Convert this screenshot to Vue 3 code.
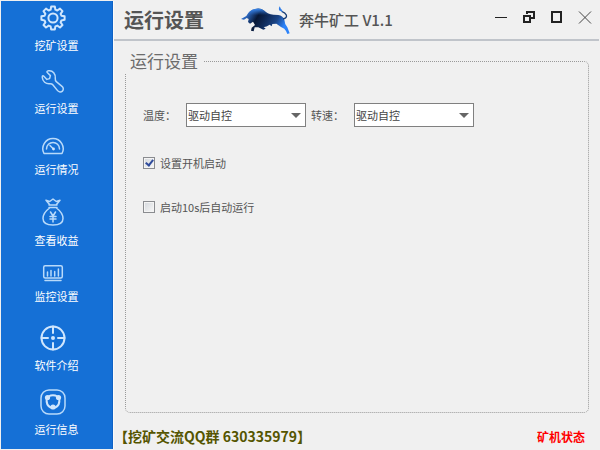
<script setup>
import { ref } from 'vue'

const items = [
  { icon: 'gear', label: '挖矿设置', w: 26, h: 26 },
  { icon: 'wrench', label: '运行设置', w: 24, h: 25 },
  { icon: 'gauge', label: '运行情况', w: 24, h: 18, loose: true },
  { icon: 'bag', label: '查看收益', w: 22, h: 28, loose: true },
  { icon: 'monitor', label: '监控设置', w: 22, h: 18 },
  { icon: 'target', label: '软件介绍', w: 26, h: 26, loose: true },
  { icon: 'info', label: '运行信息', w: 26, h: 26 },
]
const temperature = ref('auto')
const fan = ref('auto')
const bootStart = ref(true)
const autoRun = ref(false)
</script>

<template>
  <div class="window">
    <nav class="sidebar">
      <button v-for="it in items" :key="it.icon" type="button" class="nav-item" :class="{ loose: it.loose }">
        <svg class="nav-icon" :width="it.w" :height="it.h" :viewBox="`0 0 ${it.w} ${it.h}`" aria-hidden="true">
          <g v-if="it.icon === 'gear'" class="strong">
            <path d="M11.200 1.500h3.600l.6 3.200 1.900.8 2.700-1.900 2.500 2.500-1.900 2.700.8 1.900 3.200.6v3.500l-3.200.6-.8 1.900 1.900 2.700-2.500 2.500-2.700-1.900-1.900.8-.6 3.200h-3.600l-.6-3.200-1.900-.8-2.700 1.900-2.500-2.500 1.900-2.700-.8-1.900-3.200-.6v-3.500l3.200-.6.8-1.900-1.900-2.700 2.500-2.500 2.700 1.900 1.900-.8z" />
            <circle cx="13" cy="13" r="4.600" />
          </g>
          <path v-else-if="it.icon === 'wrench'" d="M7.500 1.800C5.800 2 5.500 2.800 6.500 3.800l2.900 2.800-.8 3-2.700.8-3-3.200C1.800 6.200 1.200 7 1.300 8.500c.2 4 3.500 6.600 7.500 6.200 1.300-.1 2.200 0 3 1l4.800 5.900c1.300 1.600 3.500 1.800 4.800.5s1.200-3.400-.4-4.700l-5.700-4.700c-1-.8-1.100-1.800-1-3.200C14.700 5 12 1.200 7.500 1.800z" />
          <g v-else-if="it.icon === 'gauge'">
            <path d="M3 16.500C-.5 10 4 1.500 12 1.500S24.500 10 21 16.500z" />
            <path d="M5.500 12c0-4 3-6.500 6.500-6.500s6.500 2.500 6.500 6.500M9 8.500l3.500 3.500" />
            <circle class="solid" cx="12.500" cy="12" r="1.400" />
          </g>
          <g v-else-if="it.icon === 'bag'">
            <path d="M7.500 6.500L4 2.200l3.700 1.300L11 1l3.300 2.500L18 2.200l-3.500 4.300M7 7h8M7 9.500h8M7.500 10C3.500 13 1 17 1 20.500 1 25 5 27 11 27s10-2 10-6.500c0-3.500-2.500-7.500-6.500-10.500" />
            <path d="M8.500 14l2.500 4 2.500-4M11 18v6M8 18.500h6M8 21h6" />
          </g>
          <g v-else-if="it.icon === 'monitor'">
            <rect x="1.700" y="1.700" width="18.600" height="12.300" rx="1.500" />
            <path d="M5.500 8v4M9 6.500V12M12.700 7.500V12M16.400 5v7M3 16.500h16" />
          </g>
          <g v-else-if="it.icon === 'target'">
            <circle class="strong" cx="13" cy="13" r="11.500" />
            <path class="strong" d="M13 1.500V8M13 18v6.500M1.500 13H8M18 13h6.500" />
            <circle class="solid" cx="13" cy="13" r="2" />
          </g>
          <g v-else>
            <rect x="1" y="1" width="24" height="24" rx="8" />
            <path class="strong" d="M8.500 7.500Q13 5 17.500 7.500M19.300 10c.5 4-1 7-4 8.500M10.700 18.500c-3-1.500-4.500-4.500-4-8.500" />
            <g class="solid">
              <circle cx="7.500" cy="8.500" r="2.600" />
              <circle cx="18.500" cy="8.500" r="2.600" />
              <circle cx="13" cy="18" r="2.600" />
            </g>
          </g>
        </svg>
        <span class="nav-label">{{ it.label }}</span>
      </button>
    </nav>

    <main class="main">
      <header class="header">
        <h1 class="title">运行设置</h1>
        <div class="brand">
          <svg width="49" height="28" viewBox="18 15 147 84" aria-hidden="true">
            <defs>
              <linearGradient id="hide" x1="0" y1="0" x2="1" y2="0.3">
                <stop offset="0" stop-color="#2f7de8" />
                <stop offset="0.2" stop-color="#2a62b5" />
                <stop offset="0.4" stop-color="#071735" />
                <stop offset="0.6" stop-color="#102c5c" />
                <stop offset="0.8" stop-color="#1b4486" />
                <stop offset="1" stop-color="#2c83fa" />
              </linearGradient>
              <linearGradient id="back" x1="0" y1="0" x2="0" y2="1">
                <stop offset="0" stop-color="#3b8cf5" />
                <stop offset="0.5" stop-color="#2c6fd0" stop-opacity="0" />
              </linearGradient>
            </defs>
            <path fill="url(#hide)" d="M18 54L34 45Q43 27 60 24Q76 20 88 29Q98 39 115 41L130 42Q143 44 148 56Q149 70 157 79L164 97L157 99L153 90Q150 83 138 78L124 68L112 69L110 76L104 71Q92 79 86 78L92 83L85 86L70 79L59 79L56 91L48 89L50 80L60 72L54 62L45 68L39 63L41 54L35 51L27 56Z" />
            <path fill="url(#back)" d="M18 54L34 45Q43 27 60 24Q76 20 88 29Q98 39 115 41L130 42Q143 44 148 56L100 62Z" />
            <path fill="none" stroke="#173d75" stroke-width="4" d="M144 54Q157 51 154 42Q151 35 140 31" />
            <path fill="#2f7de8" d="M134 16Q130 22 132 28L142 33Q143 26 138 24Z" />
          </svg>
          <span class="brand-name">奔牛矿工 V1.1</span>
        </div>
        <div class="controls">
          <button type="button" aria-label="最小化"><svg width="14" height="14"><path d="M1 7.500h12" /></svg></button>
          <button type="button" aria-label="还原"><svg width="14" height="14"><path class="thick" d="M5 4V2h7v6H9M2 6h6v6H2z" /></svg></button>
          <button type="button" aria-label="最大化"><svg width="14" height="14"><path class="thick" d="M2 2h9v10H2z" /></svg></button>
          <button type="button" aria-label="关闭"><svg width="14" height="14"><path class="thin" d="M1 1.500l12 12M13 1.500l-12 12" /></svg></button>
        </div>
      </header>

      <fieldset class="panel">
        <legend>运行设置</legend>
        <div class="row">
          <label for="temp">温度：</label>
          <span class="select">
            <select id="temp" v-model="temperature"><option value="auto">驱动自控</option></select>
            <svg width="10" height="5" aria-hidden="true"><path d="M0 0h10L5 5z" /></svg>
          </span>
          <label for="fan">转速：</label>
          <span class="select">
            <select id="fan" v-model="fan"><option value="auto">驱动自控</option></select>
            <svg width="10" height="5" aria-hidden="true"><path d="M0 0h10L5 5z" /></svg>
          </span>
        </div>
        <label class="check"><input v-model="bootStart" type="checkbox" /><span>设置开机启动</span></label>
        <label class="check"><input v-model="autoRun" type="checkbox" /><span>启动10s后自动运行</span></label>
      </fieldset>

      <footer class="footer">
        <span class="group">【挖矿交流QQ群 630335979】</span>
        <span class="status">矿机状态</span>
      </footer>
    </main>
  </div>
</template>

<style>
body {
  margin: 0;
  background: #f0f0f0;
}
</style>

<style scoped>
.window {
  display: flex;
  min-height: 100vh;
  box-sizing: border-box;
  padding: 1px;
  background: #f0f0f0;
  color: #555;
  font-family: "Noto Sans CJK SC", sans-serif;
  font-size: 11px;
}
button {
  padding: 0;
  border: 0;
  background: none;
  color: inherit;
  font: inherit;
}
.sidebar {
  display: flex;
  flex-direction: column;
  flex: none;
  width: 112px;
  padding-top: 4px;
  box-sizing: border-box;
  background: #1570d6;
  border-right: 1px solid #0f62c4;
  color: #fff;
}
.nav-item {
  display: flex;
  flex-direction: column;
  align-items: center;
  gap: 6px;
  padding-bottom: 16px;
}
.nav-item:last-child {
  padding-bottom: 0;
}
.nav-item.loose {
  padding-top: 5px;
}
.nav-icon {
  margin-right: 8px;
  fill: none;
  stroke: #b9dafa;
  stroke-width: 1.5;
  stroke-linejoin: round;
  stroke-linecap: round;
}
.strong {
  stroke: #d0e6fd;
  stroke-width: 2;
}
.solid {
  fill: #d0e6fd;
  stroke: none;
}
.nav-label {
  line-height: 16px;
}
.main {
  display: flex;
  flex-direction: column;
  flex: 1;
  min-width: 0;
  border-left: 1px solid #fafafa;
}
.header {
  display: flex;
  align-items: center;
  height: 38px;
  padding: 0 7px 0 10px;
  border-bottom: 2px solid #c0c4ca;
}
.title {
  margin: 0;
  font-size: 20px;
  line-height: 24px;
  font-weight: 700;
}
.brand {
  display: flex;
  align-items: center;
  gap: 9px;
  margin-left: 37px;
}
.brand-name {
  font-size: 15px;
  line-height: 24px;
  font-weight: 500;
  white-space: nowrap;
}
.controls {
  display: flex;
  gap: 14px;
  margin-left: auto;
  padding-bottom: 6px;
}
.controls svg {
  display: block;
  fill: none;
  stroke: #222;
  stroke-width: 1;
}
.controls .thick {
  stroke-width: 2;
}
.controls .thin {
  stroke: #444;
}
.panel {
  flex: 1;
  min-width: 0;
  margin: 8px 10px 0 11px;
  padding: 30px 17px 16px;
  border: 1px dotted #999;
  border-radius: 5px;
}
.panel legend {
  margin-left: -18px;
  padding: 0 5px;
  font-size: 17px;
  line-height: 24px;
  background: #f0f0f0;
  color: #6c6c6c;
}
.row {
  display: flex;
  align-items: center;
  margin-bottom: 26px;
}
.row label {
  width: 43px;
}
.select {
  display: grid;
  align-items: center;
  width: 120px;
  margin-right: 5px;
}
.select select {
  grid-area: 1 / 1;
  appearance: none;
  width: 100%;
  height: 24px;
  padding: 0 20px 0 1px;
  border: 1px solid #808080;
  border-radius: 0;
  background: #fff;
  color: #444;
  font: inherit;
}
.select svg {
  grid-area: 1 / 1;
  justify-self: end;
  margin-right: 5px;
  fill: #666;
  pointer-events: none;
}
.check {
  display: flex;
  align-items: center;
  gap: 5px;
  width: fit-content;
  margin-bottom: 24px;
  line-height: 20px;
}
.check input {
  display: grid;
  place-items: center;
  appearance: none;
  width: 12px;
  height: 12px;
  margin: 0;
  border: 1px solid #8a8c90;
  background: linear-gradient(135deg, #d3d7dc, #f8f8f8);
  box-shadow: inset 0 0 0 1px #f4f4f4;
}
.check input:checked::before {
  content: "";
  width: 3px;
  height: 6px;
  margin-bottom: 2px;
  border: solid #304c9c;
  border-width: 0 2px 2px 0;
  transform: rotate(38deg);
}
.footer {
  display: flex;
  align-items: center;
  justify-content: space-between;
  height: 36px;
  padding: 10px 14px 0 0;
  box-sizing: border-box;
  font-weight: 700;
}
.group {
  font-size: 14px;
  color: #555500;
}
.status {
  font-size: 12px;
  color: #ff0000;
}
</style>
